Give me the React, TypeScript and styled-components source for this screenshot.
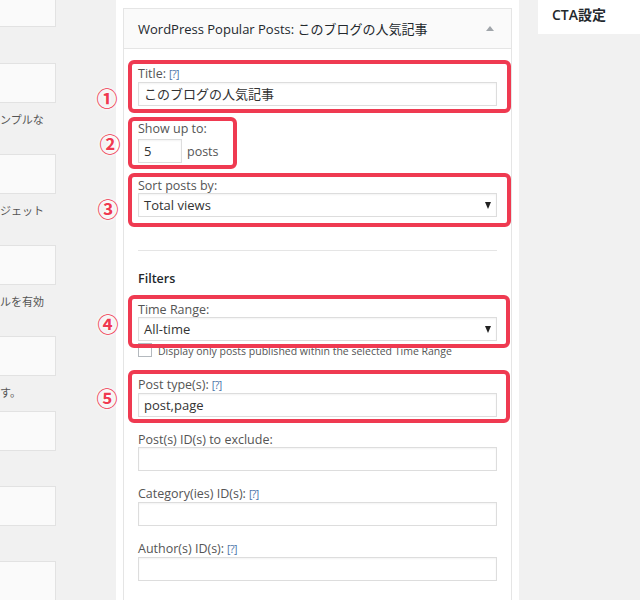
import React from "react";
import styled, { createGlobalStyle } from "styled-components";

const GlobalStyle = createGlobalStyle`
  html, body {
    margin: 0;
    padding: 0;
    background: #f1f1f1;
  }
  body {
    font-family: "Open Sans", "Noto Sans CJK JP", sans-serif;
    color: #444;
  }
`;

const Page = styled.div`
  position: relative;
  display: flex;
  align-items: flex-start;
  height: 600px;
  overflow: hidden;
  background: #f1f1f1;
`;

// left column: other widgets, cut off by the screenshot
const LeftCol = styled.div`
  width: 56px;
  margin-right: 60px;
  margin-top: -13px;
  overflow: hidden;
  flex-shrink: 0;
`;

const LeftItem = styled.div<{ $after: number }>`
  margin-bottom: ${(p) => p.$after}px;
`;

const LeftBox = styled.div`
  margin-left: -12px;
  height: 40px;
  box-sizing: border-box;
  background: #fafafa;
  border: 1px solid #e2e2e2;
`;

const LeftDesc = styled.div`
  margin-top: 9px;
  font-size: 11px;
  line-height: 16px;
  color: #555;
  white-space: nowrap;
`;

const MainCol = styled.div`
  width: 403px;
  height: 600px;
  box-sizing: border-box;
  padding: 8px 7px 0;
  background: #fff;
  flex-shrink: 0;
`;

const Widget = styled.div`
  border: 1px solid #e5e5e5;
  border-bottom: none;
  height: 620px;
  box-sizing: border-box;
`;

const WidgetHeader = styled.div`
  height: 40px;
  box-sizing: border-box;
  border-bottom: 1px solid #e5e5e5;
  background: #fafafa;
  display: flex;
  align-items: center;
  justify-content: space-between;
  padding: 0 17px 0 14px;
`;

const WidgetTitle = styled.h4`
  margin: 0;
  font-size: 13px;
  font-weight: 400;
  color: #23282d;
`;

const ToggleArrow = styled.span`
  width: 0;
  height: 0;
  border-left: 4px solid transparent;
  border-right: 4px solid transparent;
  border-bottom: 5px solid #a0a5aa;
`;

const WidgetBody = styled.div`
  padding: 17px 14px 0;
`;

const Field = styled.div`
  margin-bottom: 15px;
`;

const Label = styled.div`
  font-size: 12.5px;
  line-height: 15px;
  color: #555;
`;

const Help = styled.span`
  font-size: 10.5px;
  color: #4a74a8;
  letter-spacing: -0.5px;
  margin-left: 3px;
`;

const TextBox = styled.div<{ $w?: number }>`
  width: ${(p) => (p.$w ? `${p.$w}px` : "100%")};
  height: 24px;
  box-sizing: border-box;
  border: 1px solid #ddd;
  box-shadow: inset 0 1px 2px rgba(0, 0, 0, 0.05);
  background: #fff;
  padding: 0 5px;
  font-size: 13px;
  line-height: 22px;
  color: #333;
  white-space: nowrap;
`;

const SelectBox = styled(TextBox)`
  display: flex;
  align-items: center;
  justify-content: space-between;
  padding-right: 5px;
`;

const SelectArrow = styled.span`
  width: 0;
  height: 0;
  border-left: 3.5px solid transparent;
  border-right: 3.5px solid transparent;
  border-top: 7px solid #222;
`;

const InlineRow = styled.div`
  display: flex;
  align-items: center;
  gap: 5px;
  margin-top: 3px;
  font-size: 12.5px;
  color: #555;
`;

const Divider = styled.hr`
  border: none;
  border-top: 1px solid #e5e5e5;
  margin: 33px 0 20px;
`;

const SectionTitle = styled.div`
  font-size: 12.5px;
  font-weight: 600;
  line-height: 15px;
  color: #23282d;
  margin-bottom: 16px;
`;

const CheckRow = styled.div`
  display: flex;
  align-items: center;
  gap: 6px;
  margin-top: 3px;
  margin-bottom: 19px;
  height: 14px;
  font-size: 10.5px;
  color: #555;
  white-space: nowrap;
`;

const CheckBox = styled.span`
  width: 14px;
  height: 14px;
  box-sizing: border-box;
  border: 1px solid #b4b9be;
  background: #fff;
  flex-shrink: 0;
  margin-top: -2px;
`;

const RightCol = styled.div`
  margin-left: 19px;
  width: 102px;
  height: 34px;
  background: #fff;
  display: flex;
  align-items: center;
  padding-left: 14px;
  box-sizing: border-box;
  font-size: 14px;
  font-weight: 600;
  color: #23282d;
  padding-bottom: 6px;
`;

// red annotation marks drawn over the screenshot
const Mark = styled.div<{ $x: number; $y: number; $w: number; $h: number }>`
  position: absolute;
  left: ${(p) => p.$x}px;
  top: ${(p) => p.$y}px;
  width: ${(p) => p.$w}px;
  height: ${(p) => p.$h}px;
  box-sizing: border-box;
  border: 4px solid #ef3a51;
  border-radius: 6px;
  pointer-events: none;
`;

const Num = styled.span<{ $x: number; $y: number }>`
  position: absolute;
  left: ${(p) => p.$x - 13}px;
  top: ${(p) => p.$y - 14}px;
  width: 26px;
  text-align: center;
  font-family: "Noto Sans CJK JP", sans-serif;
  font-size: 21px;
  line-height: 28px;
  font-weight: 700;
  color: #ef3a51;
  text-shadow: 0 0 3px #fff, 0 0 3px #fff, 0 0 4px #fff;
`;

const leftItems = [
  { after: 36 },
  { desc: "ンプルな", after: 26 },
  { desc: "ジェット", after: 26 },
  { desc: "ルを有効", after: 26 },
  { desc: "す。", after: 10 },
  { after: 35 },
  { after: 35 },
  { after: 35 },
];

const marks = [
  { x: 128, y: 60, w: 383, h: 53 },
  { x: 128, y: 117, w: 109, h: 52 },
  { x: 128, y: 173, w: 383, h: 54 },
  { x: 128, y: 295, w: 382, h: 53 },
  { x: 128, y: 370, w: 382, h: 53 },
];

const nums = [
  { t: "①", x: 107, y: 97 },
  { t: "②", x: 110, y: 143 },
  { t: "③", x: 108, y: 208 },
  { t: "④", x: 108, y: 323 },
  { t: "⑤", x: 107, y: 397 },
];

export default function App() {
  return (
    <>
      <GlobalStyle />
      <Page>
        <LeftCol>
          {leftItems.map((it, i) => (
            <LeftItem key={i} $after={it.after}>
              <LeftBox />
              {it.desc && <LeftDesc>{it.desc}</LeftDesc>}
            </LeftItem>
          ))}
        </LeftCol>

        <MainCol>
          <Widget>
            <WidgetHeader>
              <WidgetTitle>WordPress Popular Posts: このブログの人気記事</WidgetTitle>
              <ToggleArrow />
            </WidgetHeader>
            <WidgetBody>
              <Field>
                <Label>
                  Title:<Help>[?]</Help>
                </Label>
                <TextBox>このブログの人気記事</TextBox>
              </Field>

              <Field>
                <Label>Show up to:</Label>
                <InlineRow>
                  <TextBox $w={44}>5</TextBox>
                  posts
                </InlineRow>
              </Field>

              <Field>
                <Label>Sort posts by:</Label>
                <SelectBox>
                  Total views
                  <SelectArrow />
                </SelectBox>
              </Field>

              <Divider />
              <SectionTitle>Filters</SectionTitle>

              <Label>Time Range:</Label>
              <SelectBox>
                All-time
                <SelectArrow />
              </SelectBox>
              <CheckRow>
                <CheckBox />
                Display only posts published within the selected Time Range
              </CheckRow>

              <Field>
                <Label>
                  Post type(s):<Help>[?]</Help>
                </Label>
                <TextBox>post,page</TextBox>
              </Field>

              <Field>
                <Label>Post(s) ID(s) to exclude:</Label>
                <TextBox />
              </Field>

              <Field>
                <Label>
                  Category(ies) ID(s):<Help>[?]</Help>
                </Label>
                <TextBox />
              </Field>

              <Field>
                <Label>
                  Author(s) ID(s):<Help>[?]</Help>
                </Label>
                <TextBox />
              </Field>
            </WidgetBody>
          </Widget>
        </MainCol>

        <RightCol>CTA設定</RightCol>

        {marks.map((m, i) => (
          <Mark key={i} $x={m.x} $y={m.y} $w={m.w} $h={m.h} />
        ))}
        {nums.map((n) => (
          <Num key={n.t} $x={n.x} $y={n.y}>
            {n.t}
          </Num>
        ))}
      </Page>
    </>
  );
}
